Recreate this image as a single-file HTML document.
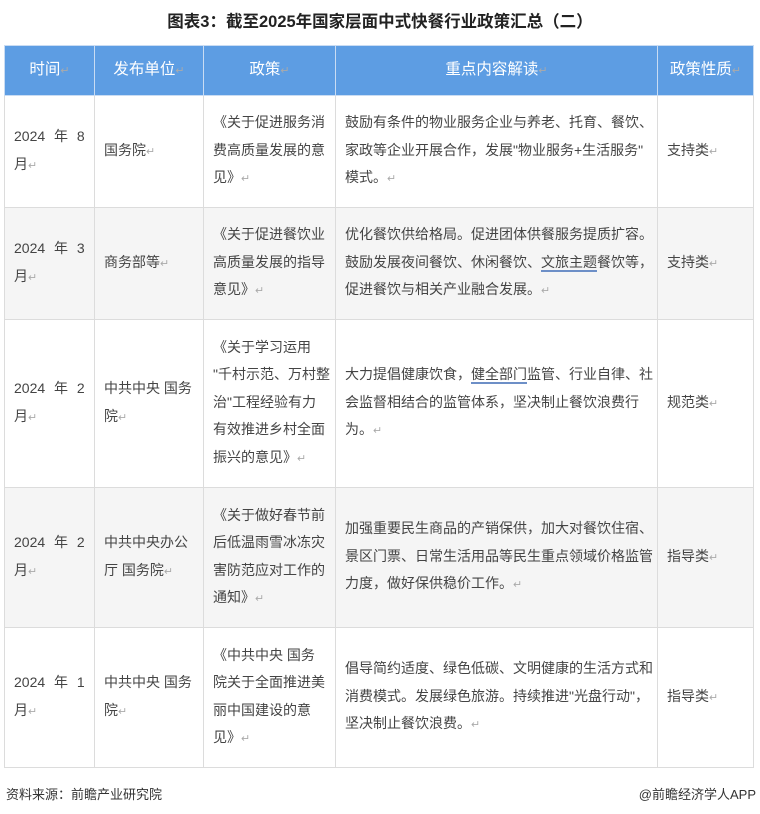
<!DOCTYPE html>
<html><head><meta charset="utf-8"><style>
*{margin:0;padding:0;box-sizing:border-box}
body{width:760px;height:814px;background:#fff;font-family:"Liberation Sans","Noto Sans CJK SC",sans-serif;color:#444;position:relative;overflow:hidden}
h1{position:absolute;top:8px;left:0;width:760px;text-align:center;font-size:16.5px;font-weight:bold;color:#222;font-family:"Liberation Sans","Noto Sans CJK SC",sans-serif}
table{position:absolute;left:4px;top:45px;border-collapse:collapse;table-layout:fixed;width:749px}
td,th{border:1px solid #dcdcdc;font-size:14px;line-height:27.5px;padding:0 9px;vertical-align:middle;font-weight:normal;white-space:nowrap}
th{background:#5d9de3;color:#fff;font-size:15.5px;height:50px;text-align:center;border-color:#c9dcf3}
tr.g td{background:#f5f5f5}
.r{color:#aaa;font-size:11px}
u{text-decoration:none;border-bottom:2px solid #6d8fc7}
.ft{position:absolute;top:784px;font-size:13px;color:#333}
.t{word-spacing:5px}
</style></head><body>
<h1>图表3：截至2025年国家层面中式快餐行业政策汇总（二）</h1>
<table>
<colgroup><col style="width:90px"><col style="width:109px"><col style="width:132px"><col style="width:322px"><col style="width:96px"></colgroup>
<tr><th>时间<span class="r">↵</span></th><th>发布单位<span class="r">↵</span></th><th>政策<span class="r">↵</span></th><th>重点内容解读<span class="r">↵</span></th><th>政策性质<span class="r">↵</span></th></tr>
<tr style="height:112px"><td class="t">2024 年 8<br>月<span class="r">↵</span></td><td>国务院<span class="r">↵</span></td><td>《关于促进服务消<br>费高质量发展的意<br>见》<span class="r">↵</span></td><td>鼓励有条件的物业服务企业与养老、托育、餐饮、<br>家政等企业开展合作，发展"物业服务+生活服务"<br>模式。<span class="r">↵</span></td><td>支持类<span class="r">↵</span></td></tr>
<tr class="g" style="height:112px"><td class="t">2024 年 3<br>月<span class="r">↵</span></td><td>商务部等<span class="r">↵</span></td><td>《关于促进餐饮业<br>高质量发展的指导<br>意见》<span class="r">↵</span></td><td>优化餐饮供给格局。促进团体供餐服务提质扩容。<br>鼓励发展夜间餐饮、休闲餐饮、<u>文旅主题</u>餐饮等，<br>促进餐饮与相关产业融合发展。<span class="r">↵</span></td><td>支持类<span class="r">↵</span></td></tr>
<tr style="height:168px"><td class="t">2024 年 2<br>月<span class="r">↵</span></td><td>中共中央 国务<br>院<span class="r">↵</span></td><td>《关于学习运用<br>"千村示范、万村整<br>治"工程经验有力<br>有效推进乡村全面<br>振兴的意见》<span class="r">↵</span></td><td>大力提倡健康饮食，<u>健全部门</u>监管、行业自律、社<br>会监督相结合的监管体系，坚决制止餐饮浪费行<br>为。<span class="r">↵</span></td><td>规范类<span class="r">↵</span></td></tr>
<tr class="g" style="height:140px"><td class="t">2024 年 2<br>月<span class="r">↵</span></td><td>中共中央办公<br>厅 国务院<span class="r">↵</span></td><td>《关于做好春节前<br>后低温雨雪冰冻灾<br>害防范应对工作的<br>通知》<span class="r">↵</span></td><td>加强重要民生商品的产销保供，加大对餐饮住宿、<br>景区门票、日常生活用品等民生重点领域价格监管<br>力度，做好保供稳价工作。<span class="r">↵</span></td><td>指导类<span class="r">↵</span></td></tr>
<tr style="height:140px"><td class="t">2024 年 1<br>月<span class="r">↵</span></td><td>中共中央 国务<br>院<span class="r">↵</span></td><td>《中共中央 国务<br>院关于全面推进美<br>丽中国建设的意<br>见》<span class="r">↵</span></td><td>倡导简约适度、绿色低碳、文明健康的生活方式和<br>消费模式。发展绿色旅游。持续推进"光盘行动"，<br>坚决制止餐饮浪费。<span class="r">↵</span></td><td>指导类<span class="r">↵</span></td></tr>
</table>
<div class="ft" style="left:6px">资料来源：前瞻产业研究院</div>
<div class="ft" style="right:4px">@前瞻经济学人APP</div>
</body></html>
